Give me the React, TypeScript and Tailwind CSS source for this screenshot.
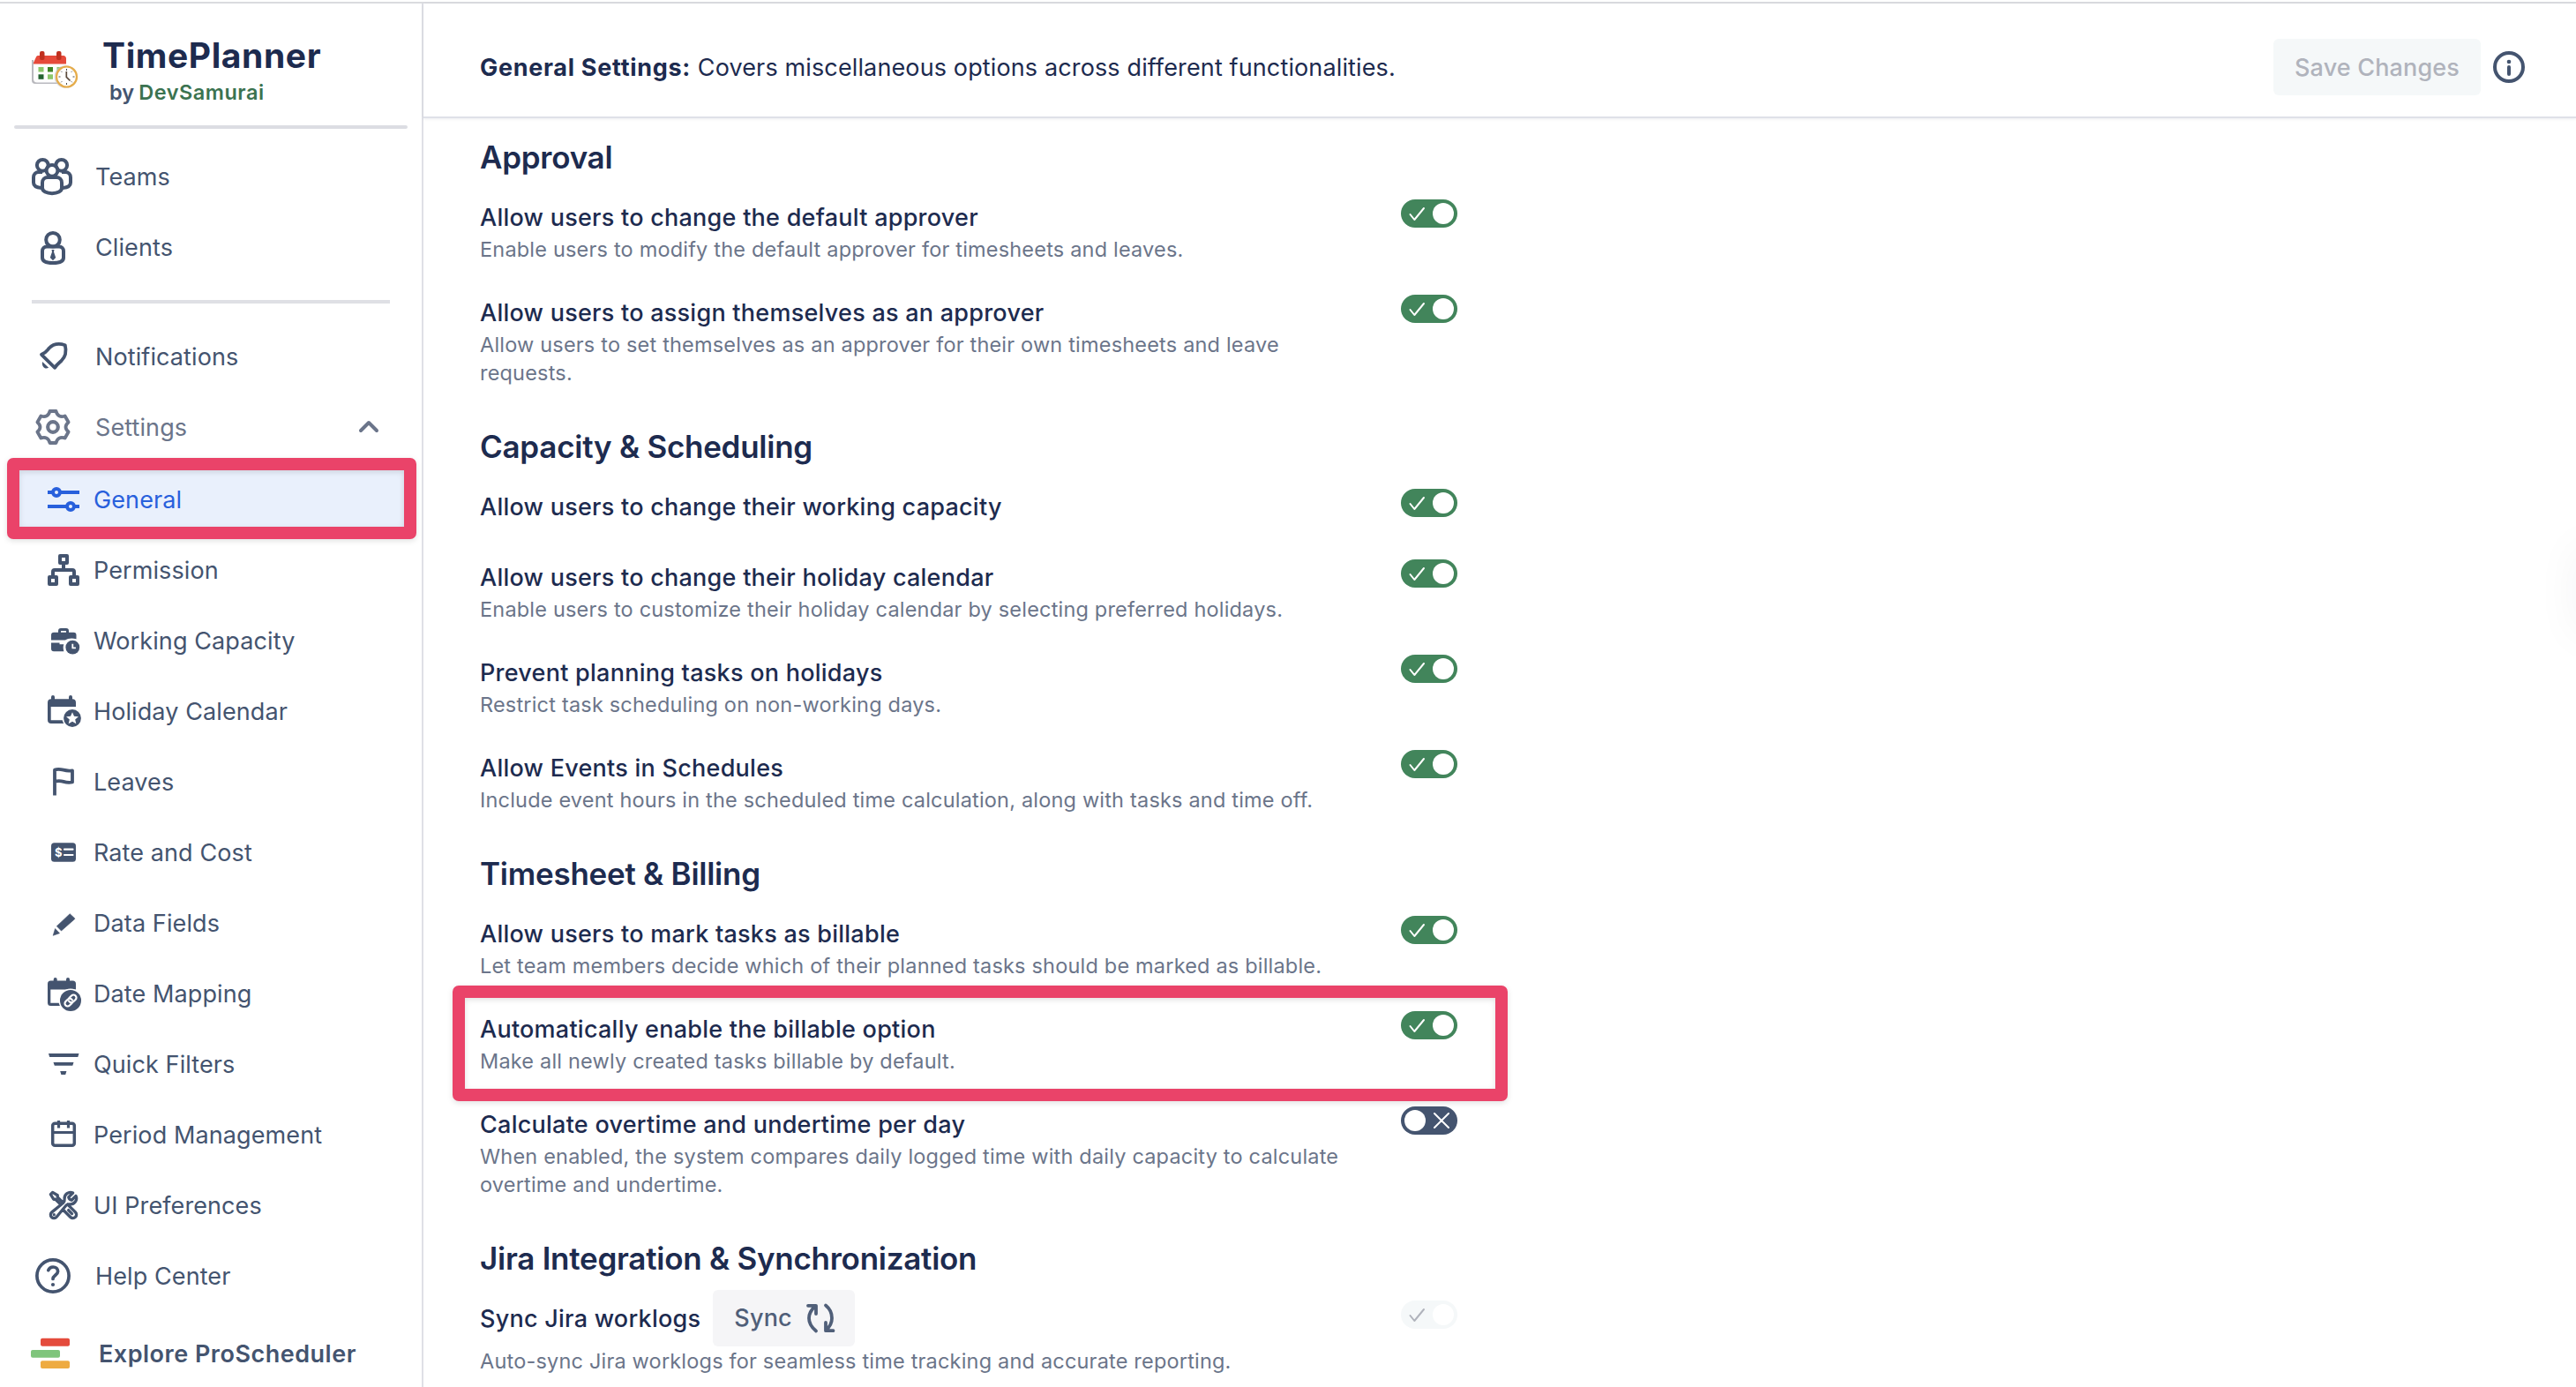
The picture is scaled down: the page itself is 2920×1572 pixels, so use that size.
// ==================== App.tsx ====================
import React from "react";
import clsx from "clsx";
import { HiOutlineWrenchScrewdriver } from "react-icons/hi2";

interface IconProps {
  children: React.ReactNode;
  className?: string;
}

// All sidebar icons are drawn on the same 48px grid
const Icon: React.FC<IconProps> = ({ children, className }) => (
  <svg
    viewBox="0 0 48 48"
    className={clsx("h-12 w-12 shrink-0", className)}
    fill="none"
    stroke="currentColor"
    strokeWidth={4}
    strokeLinejoin="round"
  >
    {children}
  </svg>
);

const TeamsIcon = () => (
  <Icon>
    <circle cx="12.3" cy="11.3" r="6.4" />
    <circle cx="33.7" cy="11.3" r="6.4" />
    <path d="M12 19H8a6 6 0 0 0-6 6v6c0 3.500 3 5.500 9 6M34 19h4a6 6 0 0 1 6 6v6c0 3.500-3 5.500-9 6" />
    <circle cx="23" cy="17.300" r="6.400" fill="#fff" />
    <path
      d="M18 25h10a6 6 0 0 1 6 6v6c0 4-5 6.200-11 6.200S12 41 12 37v-6a6 6 0 0 1 6-6z"
      fill="#fff"
    />
  </Icon>
);

const ClientsIcon = () => (
  <Icon>
    <circle cx="24" cy="15.700" r="7.800" />
    <path d="M17 23.500h14a5 5 0 0 1 5 5V36c0 4.500-6 6-12 6s-12-1.500-12-6v-7.500a5 5 0 0 1 5-5z" />
    <path
      d="M22.500 27h3l-.5 2.500 2.200 6.500-3.200 3.200-3.200-3.200 2.200-6.500z"
      fill="currentColor"
      stroke="none"
    />
  </Icon>
);

const BellIcon = () => (
  <Icon>
    <path
      d="M11 21.800c5-2 6-4 8.500-7C24.500 9.500 31 9 37.800 11.200 39.500 18 38.500 24 33.500 29c-3 2.800-5 4-7.300 7.800z"
      strokeWidth={3.800}
    />
    <path
      d="M12 30l7.200 6.800c-2 1-4.300 1-5.700-.5s-2-3.800-1.500-6.300z"
      fill="currentColor"
      stroke="none"
    />
  </Icon>
);

const GearIcon = () => (
  <Icon>
    <path
      d="M20.500 6h7Q29.700 14.100 37.600 11.500L41.600 18.500Q35.400 24 41.600 29.500L37.600 36.500Q29.700 33.900 27.500 42H20.500Q18.300 33.900 10.400 36.500L6.400 29.500Q12.600 24 6.400 18.500L10.400 11.500Q18.300 14.100 20.500 6z"
      strokeWidth={3.800}
    />
    <circle cx="24" cy="24" r="5.800" strokeWidth={4.200} />
  </Icon>
);

const SlidersIcon = () => (
  <Icon>
    <path d="M6 16h6M20 16h22M6 32h22M36 32h6" />
    <circle cx="16" cy="16" r="4" />
    <circle cx="32" cy="32" r="4" />
  </Icon>
);

const PermissionIcon = () => (
  <Icon>
    <rect x="20" y="8" width="8" height="8" />
    <rect x="8" y="32" width="8" height="8" />
    <rect x="32" y="32" width="8" height="8" />
    <path d="M24 17v7M12 31v-5a2 2 0 0 1 2-2h20a2 2 0 0 1 2 2v5" />
  </Icon>
);

const BriefcaseIcon = () => (
  <Icon>
    <path d="M19.500 16v-3a1.500 1.500 0 0 1 1.500-1.500h6a1.500 1.500 0 0 1 1.500 1.500v3" strokeWidth={3} />
    <path
      d="M13 14.700h22.500a3 3 0 0 1 3 3v4.500c-5.500-1.500-10-.5-12.500 1.300H10v-5.800a3 3 0 0 1 3-3zM10 26.500h9.500v1.800h4.800c-.9 2.500-.8 5 .1 8H13a3 3 0 0 1-3-3z"
      fill="currentColor"
      stroke="none"
    />
    <circle cx="34.300" cy="31.700" r="9.200" fill="#fff" stroke="none" />
    <circle cx="34.300" cy="31.700" r="7.900" fill="currentColor" stroke="none" />
    <path d="M34.300 27.800v4.600h3.600" stroke="#fff" strokeWidth={1.800} />
  </Icon>
);

const HolidayIcon = () => (
  <Icon>
    <path d="M12 8v5M32 8v5" strokeLinecap="round" />
    <path
      d="M10 10.300h24a4 4 0 0 1 4 4V19H9.700v15.300H26V38H10a4 4 0 0 1-4-4V14.300a4 4 0 0 1 4-4z"
      fill="currentColor"
      stroke="none"
    />
    <circle cx="34" cy="32" r="11.500" fill="#fff" stroke="none" />
    <circle cx="34" cy="32" r="9.900" fill="currentColor" stroke="none" />
    <path
      d="M34 25.200l2 4.500 4.900.5-3.700 3.200 1.100 4.800-4.300-2.500-4.300 2.500 1.100-4.800-3.700-3.200 4.900-.5z"
      fill="#fff"
      stroke="none"
    />
  </Icon>
);

const FlagIcon = () => (
  <Icon>
    <path
      d="M14 39.500V10.500c3-1 7-.6 10 .2s7 1 10 .6v13.200c-4 .8-7 .3-10-.6s-7-.9-10-.2"
      strokeWidth={3.800}
    />
  </Icon>
);

const RateIcon = () => (
  <Icon>
    <rect x="10" y="13.300" width="28" height="21.400" rx="3.500" fill="currentColor" stroke="none" />
    <text
      x="14"
      y="28.700"
      fill="#fff"
      stroke="none"
      className="font-['Inter',sans-serif] text-[13px] font-bold"
    >
      $
    </text>
    <path d="M25 20.700h9.500M25 27h9.500" stroke="#fff" strokeWidth={2.200} strokeLinecap="round" />
  </Icon>
);

const PencilIcon = () => (
  <Icon>
    <path
      d="M31.200 13.700l5.400 5a.8.8 0 0 1 0 1L21.500 33l-5.200-5.300zM14.500 30.500l5 5.200-7.300 2.600z"
      fill="currentColor"
      stroke="currentColor"
      strokeWidth={0.600}
    />
  </Icon>
);

const DateMappingIcon = () => (
  <Icon>
    <path d="M14.700 8v5M29 8v5" strokeLinecap="round" />
    <path
      d="M9.500 9.500h25A3.500 3.500 0 0 1 38 13v6.500H9.300v15.200H20V38H9.500A3.500 3.500 0 0 1 6 34.500V13a3.500 3.500 0 0 1 3.500-3.500z"
      fill="currentColor"
      stroke="none"
    />
    <circle cx="32" cy="32" r="13.500" fill="#fff" stroke="none" />
    <circle cx="32" cy="32" r="12" fill="currentColor" stroke="none" />
    <g transform="rotate(-45 32 32)" stroke="#fff" strokeWidth={2.200} strokeLinecap="round">
      <path d="M31 35.200h-3.700a3.200 3.200 0 0 1 0-6.400h3.400a3.200 3.200 0 0 1 3 4.200" />
      <path d="M33 28.800h3.700a3.200 3.200 0 0 1 0 6.400h-3.400a3.200 3.200 0 0 1-3-4.200" />
    </g>
  </Icon>
);

const FiltersIcon = () => (
  <Icon>
    <path
      d="M7 12h34.500l-1.200 4H8.200zM12.500 22h23l-1.200 3.800H13.800zM20.200 32h7.200l-1.200 4h-4.800z"
      fill="currentColor"
      stroke="none"
    />
  </Icon>
);

const PeriodIcon = () => (
  <Icon>
    <rect x="11.700" y="11.300" width="24.600" height="25" rx="2.500" strokeWidth={3.500} />
    <path d="M11.700 21.500h24.600M18.500 8v8.500M29.500 8v8.500" strokeWidth={3.200} />
  </Icon>
);

const PreferencesIcon = () => (
  <span className="flex h-12 w-12 shrink-0 items-center justify-center">
    <HiOutlineWrenchScrewdriver className="h-9 w-9" strokeWidth={2.200} />
  </span>
);

const HelpIcon = () => (
  <Icon>
    <circle cx="24" cy="24" r="18.100" strokeWidth={3.700} />
    <path
      d="M18.800 17.700c.9-2.400 2.900-3.700 5.300-3.700 3.200 0 5.500 2.100 5.500 5 0 4-5.600 4.500-5.600 8.500"
      strokeLinecap="round"
      strokeWidth={3.700}
    />
    <circle cx="24" cy="34" r="2.100" fill="currentColor" stroke="none" />
  </Icon>
);

const InfoIcon = () => (
  <Icon className="text-[#44546f]">
    <circle cx="24" cy="24" r="16" />
    <circle cx="24" cy="18" r="2.300" fill="currentColor" stroke="none" />
    <path d="M24 24v8" strokeLinecap="round" />
  </Icon>
);

const SyncIcon = () => (
  <Icon>
    <path
      d="M19 38.500C13.500 34 11 29.500 11 24c0-5 2.500-9.500 7-13.500M10 9.800h9V19M30 9.500C35 13.500 37 18.500 37 24c0 5-2.500 10-7 13.500M38.500 38.200H30V29"
      strokeLinecap="round"
      strokeWidth={3.800}
    />
  </Icon>
);

const AppLogo = () => (
  <svg viewBox="0 0 56 48" className="h-12 w-14 shrink-0">
    <path d="M2 12h37v22a5 5 0 0 1-5 5H6a4 4 0 0 1-4-4z" fill="#b9b9be" />
    <path d="M4 12h37v21a5 5 0 0 1-5 4.500H8a4 4 0 0 1-4-4z" fill="#fdfdfd" />
    <path d="M4 15l3-6.500c.4-1 1.400-1.500 2.500-1.500H38c1.500 0 3 1.500 3 3v6.500H4z" fill="#e64a3b" />
    <rect x="11" y="2" width="5.500" height="10" rx="2" fill="#c0301f" />
    <rect x="30" y="2" width="5.500" height="10" rx="2" fill="#c0301f" />
    <rect x="9.500" y="20" width="6" height="5.500" fill="#8cc76b" />
    <rect x="20" y="20" width="6" height="5.500" fill="#3f8427" />
    <rect x="30.500" y="20" width="6" height="5.500" fill="#8cc76b" />
    <rect x="9.500" y="28.300" width="6" height="5.500" fill="#236230" />
    <rect x="20" y="28.300" width="6" height="5.500" fill="#8cc76b" />
    <circle cx="40.500" cy="31" r="13" fill="#c9c9cf" opacity=".6" />
    <circle cx="41.500" cy="31" r="11.500" fill="#fff" stroke="#e5ac4b" strokeWidth="2.200" />
    <path
      d="M41.500 22v2M41.500 38v2M32.500 31h2M48.500 31h2M35.200 24.700l1 1M46.800 36.300l1 1M47.800 24.700l-1 1M36.200 36.300l-1 1"
      stroke="#4a4a4a"
      strokeWidth="1"
    />
    <path d="M41.300 25v6.300l4.200 4.200" fill="none" stroke="#5b4a3c" strokeWidth="1.700" />
  </svg>
);

type ToggleState = "on" | "off" | "disabled";

const Toggle: React.FC<{ state: ToggleState }> = ({ state }) => (
  <button
    className={clsx(
      "flex h-8 w-16 shrink-0 items-center rounded-full p-1",
      state === "on" && "bg-[#42855b] text-white",
      state === "off" && "flex-row-reverse bg-[#44546f] text-white",
      state === "disabled" && "bg-[#f5f8f9] text-[#b0b3bc]"
    )}
    role="switch"
    aria-checked={state !== "off"}
    disabled={state === "disabled"}
  >
    <svg viewBox="0 0 32 24" className="h-6 w-8" fill="none" stroke="currentColor" strokeWidth="2">
      {state === "off" ? (
        <path d="M10 4l16 16M26 4L10 20" strokeLinecap="round" />
      ) : (
        <path d="M6.500 13l4.800 6L22 6" strokeLinecap="round" strokeLinejoin="round" />
      )}
    </svg>
    <span className="h-6 w-6 shrink-0 rounded-full bg-white" />
  </button>
);

interface NavEntry {
  label: string;
  icon: React.FC;
}

const subItems: NavEntry[] = [
  { label: "Permission", icon: PermissionIcon },
  { label: "Working Capacity", icon: BriefcaseIcon },
  { label: "Holiday Calendar", icon: HolidayIcon },
  { label: "Leaves", icon: FlagIcon },
  { label: "Rate and Cost", icon: RateIcon },
  { label: "Data Fields", icon: PencilIcon },
  { label: "Date Mapping", icon: DateMappingIcon },
  { label: "Quick Filters", icon: FiltersIcon },
  { label: "Period Management", icon: PeriodIcon },
  { label: "UI Preferences", icon: PreferencesIcon },
];

const NavItem: React.FC<NavEntry> = ({ label, icon: ItemIcon }) => (
  <a className="flex h-20 items-center gap-6 pl-9">
    <ItemIcon />
    <span className="pt-0.5">{label}</span>
  </a>
);

const SubNavItem: React.FC<NavEntry> = ({ label, icon: ItemIcon }) => (
  <a className="flex h-20 items-center gap-2.5 pl-12">
    <ItemIcon />
    <span className="pt-0.5">{label}</span>
  </a>
);

// Pink marker drawn over the highlighted rows
const Marker: React.FC<{ className: string }> = ({ className }) => (
  <div
    className={clsx(
      "pointer-events-none absolute rounded-[7px] border-[14px] border-[#ea4369] drop-shadow-[0_2px_3px_rgba(0,0,0,0.12)]",
      className
    )}
  />
);

const Sidebar = () => (
  <aside className="flex w-[480px] shrink-0 flex-col border-r-2 border-[#dfe0e6] text-[27px] tracking-[0.1px] text-[#44546f]">
    <div className="flex h-[138px] shrink-0 pl-[34px] pt-[35px]">
      <div className="pt-[17px]">
        <AppLogo />
      </div>
      <div className="pl-[26px]">
        <h1 className="text-[39px] font-bold leading-[48px] tracking-[0.6px] text-[#1d2b4f]">
          TimePlanner
        </h1>
        <p className="pl-2 text-[23.5px] font-semibold leading-[36px]">
          by <span className="-ml-px tracking-[0.5px] text-[#3b7350]">DevSamurai</span>
        </p>
      </div>
    </div>
    <hr className="mx-4 h-1 shrink-0 rounded-full border-0 bg-[#dcdde3]" />

    <nav className="mt-[14px] flex shrink-0 flex-col">
      <NavItem label="Teams" icon={TeamsIcon} />
      <NavItem label="Clients" icon={ClientsIcon} />
      <hr className="my-5 ml-9 mr-9 h-1 border-0 bg-[#dfe0e5]" />
      <NavItem label="Notifications" icon={BellIcon} />
      <div className="flex items-center justify-between pr-12 text-[#6b758a]">
        <NavItem label="Settings" icon={GearIcon} />
        <svg
          viewBox="0 0 24 24"
          className="h-6 w-6"
          fill="none"
          stroke="currentColor"
          strokeWidth="4"
          strokeLinecap="round"
          strokeLinejoin="round"
        >
          <path d="M3 16l9-9 9 9" />
        </svg>
      </div>
      <a className="relative mx-4 mt-0.5 flex h-20 items-center gap-2.5 bg-[#e9f0fc] pl-8 text-[#2860dc]">
        <SlidersIcon />
        <span className="pt-0.5">General</span>
        <Marker className="-bottom-[5px] -left-2 -right-2.5 -top-[7.5px]" />
      </a>
      {subItems.map((item) => (
        <SubNavItem key={item.label} {...item} />
      ))}
      <NavItem label="Help Center" icon={HelpIcon} />
      <a className="mt-2 flex h-20 items-center gap-8 pl-[34px] font-semibold tracking-[0.5px]">
        <svg viewBox="0 0 46 48" className="h-12 w-[46px]">
          <rect x="12" y="6.700" width="33" height="9" rx="2" fill="#e44b3c" />
          <rect x="1" y="20" width="33" height="8.800" rx="2" fill="#7fc57c" />
          <rect x="12" y="32.300" width="33" height="8.800" rx="2" fill="#eeab41" />
        </svg>
        <span className="pt-0.5">Explore ProScheduler</span>
      </a>
    </nav>
  </aside>
);

interface Setting {
  title: string;
  description?: string;
  state: ToggleState;
  marked?: boolean;
  sync?: boolean;
}

const sections: { heading: string; settings: Setting[] }[] = [
  {
    heading: "Approval",
    settings: [
      {
        title: "Allow users to change the default approver",
        description: "Enable users to modify the default approver for timesheets and leaves.",
        state: "on",
      },
      {
        title: "Allow users to assign themselves as an approver",
        description:
          "Allow users to set themselves as an approver for their own timesheets and leave requests.",
        state: "on",
      },
    ],
  },
  {
    heading: "Capacity & Scheduling",
    settings: [
      { title: "Allow users to change their working capacity", state: "on" },
      {
        title: "Allow users to change their holiday calendar",
        description:
          "Enable users to customize their holiday calendar by selecting preferred holidays.",
        state: "on",
      },
      {
        title: "Prevent planning tasks on holidays",
        description: "Restrict task scheduling on non-working days.",
        state: "on",
      },
      {
        title: "Allow Events in Schedules",
        description:
          "Include event hours in the scheduled time calculation, along with tasks and time off.",
        state: "on",
      },
    ],
  },
  {
    heading: "Timesheet & Billing",
    settings: [
      {
        title: "Allow users to mark tasks as billable",
        description:
          "Let team members decide which of their planned tasks should be marked as billable.",
        state: "on",
      },
      {
        title: "Automatically enable the billable option",
        description: "Make all newly created tasks billable by default.",
        state: "on",
        marked: true,
      },
      {
        title: "Calculate overtime and undertime per day",
        description:
          "When enabled, the system compares daily logged time with daily capacity to calculate overtime and undertime.",
        state: "off",
      },
    ],
  },
  {
    heading: "Jira Integration & Synchronization",
    settings: [
      {
        title: "Sync Jira worklogs",
        description: "Auto-sync Jira worklogs for seamless time tracking and accurate reporting.",
        state: "disabled",
        sync: true,
      },
    ],
  },
];

const SettingRow: React.FC<{ setting: Setting }> = ({ setting }) => (
  <div className="relative mb-9 flex min-h-11 w-[1108px] justify-between">
    <div className={clsx("w-[1000px]", setting.sync && "-mt-3")}>
      <div className="flex items-center gap-3.5">
        <h3 className="-mb-px pt-px text-[27px] font-medium leading-10 tracking-[0.25px] text-[#1d2b4f]">
          {setting.title}
        </h3>
        {setting.sync && (
          <button className="flex h-16 w-[161px] items-center gap-2 rounded-md bg-[#f5f5f7] pl-6 text-[27px] font-medium tracking-[0.2px] text-[#505f79]">
            Sync
            <SyncIcon />
          </button>
        )}
      </div>
      {setting.description && (
        <p className="-mb-px pt-px text-[23.5px] leading-8 tracking-[0.19px] text-[#6b758a]">
          {setting.description}
        </p>
      )}
    </div>
    <Toggle state={setting.state} />
    {setting.marked && <Marker className="-left-[31px] -right-[57px] -top-[29.5px] h-[131px]" />}
  </div>
);

const App: React.FC = () => {
  return (
    <div className="relative flex h-[1572px] w-[2920px] flex-col overflow-hidden bg-white font-['Inter',sans-serif]">
      <div className="h-1 shrink-0 border-b-2 border-[#dadbdf]" />
      <div className="flex min-h-0 flex-1">
        <Sidebar />
        <main className="min-w-0 flex-1">
          <header className="flex h-[130px] items-center justify-between border-b-2 border-[#dfe1e8] pl-16 pr-[52px] pt-4 shadow-[0_1px_3px_rgba(9,30,66,0.08)]">
            <p className="pt-0.5 text-[27px] tracking-[0.13px] text-[#1d2b4f]">
              <span className="font-bold tracking-[0.7px]">General Settings:</span> Covers
              miscellaneous options across different functionalities.
            </p>
            <div className="flex items-center gap-2">
              <button
                className="h-16 w-[235px] rounded-md bg-[#f5f8f9] pt-0.5 text-[27px] font-medium tracking-[0.15px] text-[#b0b3bc]"
                disabled
              >
                Save Changes
              </button>
              <InfoIcon />
            </div>
          </header>

          <div className="pl-16 pt-3">
            {sections.map((section) => (
              <section key={section.heading} className="pt-2">
                <h2 className="mb-6 text-[35px] font-semibold leading-[48px] tracking-[-0.26px] text-[#1d2b4f]">
                  {section.heading}
                </h2>
                {section.settings.map((setting) => (
                  <SettingRow key={setting.title} setting={setting} />
                ))}
              </section>
            ))}
          </div>
        </main>
      </div>
      {/* collapsed side panel, only its shadow reaches the page */}
      <div className="absolute left-full top-[620px] h-[100px] w-10 shadow-[0_0_50px_rgba(9,30,66,0.05)]" />
    </div>
  );
};

export default App;
